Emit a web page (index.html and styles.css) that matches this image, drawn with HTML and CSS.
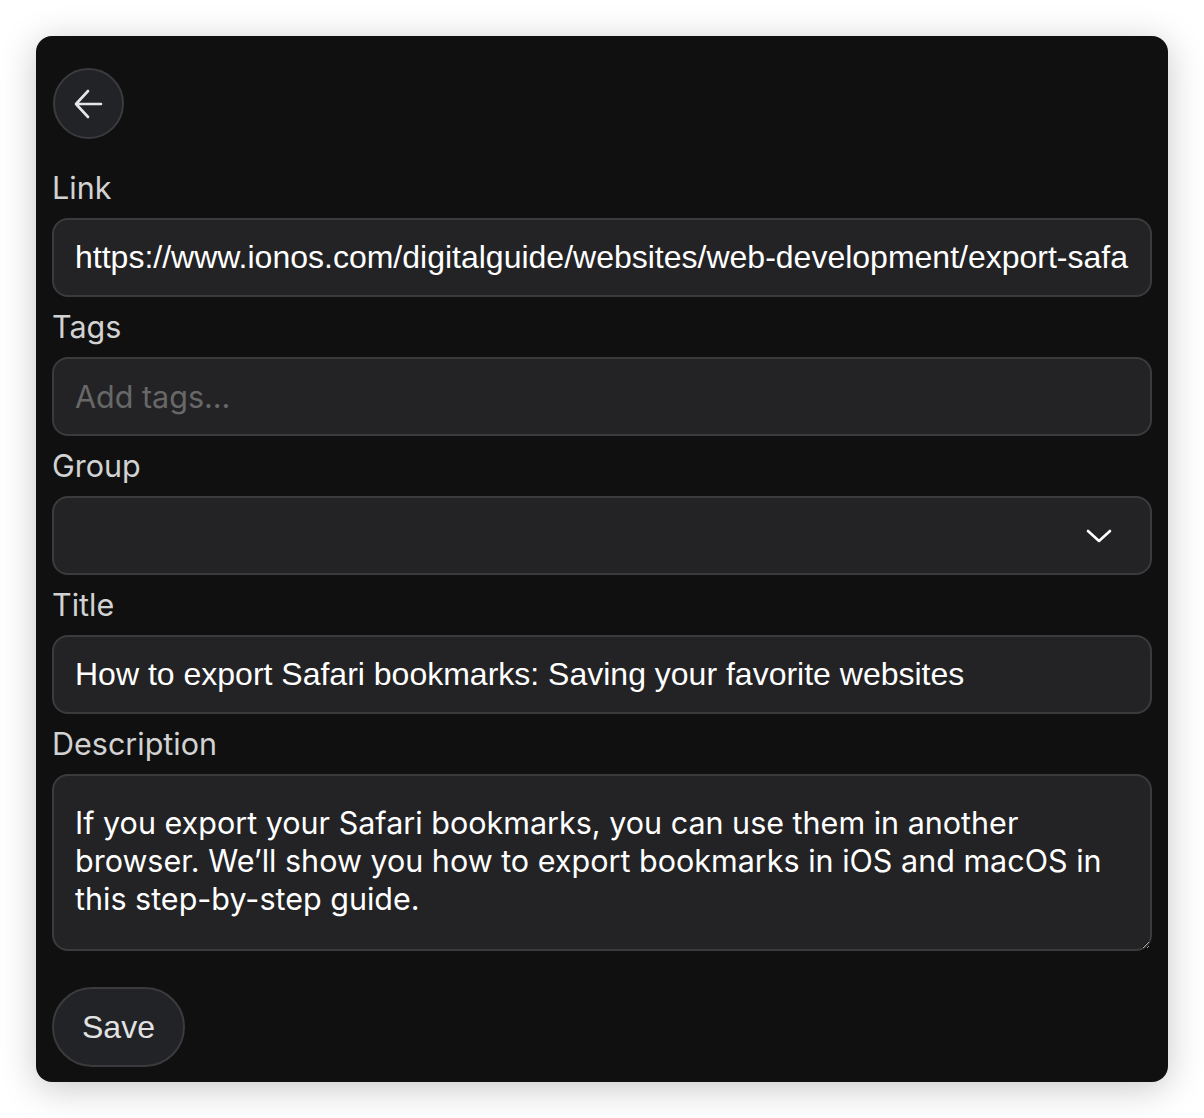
FILE: index.html
```html
<!DOCTYPE html>
<html lang="en">
<head>
<meta charset="utf-8">
<title>Edit link</title>
<link rel="stylesheet" href="styles.css">
</head>
<body>
<div class="card">
  <button class="back" type="button" aria-label="Back">
    <svg width="30" height="30" viewBox="0 0 30 30" fill="none" stroke="currentColor" stroke-width="2.6" stroke-linecap="round" stroke-linejoin="round">
      <path d="M27 15H2M14 2L2 15L14 28"/>
    </svg>
  </button>
  <form class="form">
    <label class="label" for="link">Link</label>
    <input class="field field-arial" id="link" type="text" value="https://www.ionos.com/digitalguide/websites/web-development/export-safari-bookmarks/">
    <label class="label" for="tags">Tags</label>
    <input class="field" id="tags" type="text" placeholder="Add tags...">
    <label class="label" for="group">Group</label>
    <div class="select">
      <svg class="chev" width="26" height="14" viewBox="0 0 26 14" fill="none" stroke="#ffffff" stroke-width="2.6" stroke-linecap="round" stroke-linejoin="round">
        <path d="M2 2L13 12L24 2"/>
      </svg>
    </div>
    <label class="label" for="title">Title</label>
    <input class="field field-arial" id="title" type="text" value="How to export Safari bookmarks: Saving your favorite websites">
    <label class="label" for="desc">Description</label>
    <textarea class="area" id="desc">If you export your Safari bookmarks, you can use them in another browser. We’ll show you how to export bookmarks in iOS and macOS in this step-by-step guide.</textarea>
    <div class="actions">
      <button class="save" type="button">Save</button>
    </div>
  </form>
</div>
</body>
</html>
```
FILE: styles.css
```css
* { box-sizing: border-box; }
html, body { margin: 0; padding: 0; background: #ffffff; }
body {
  padding: 36px;
  font-family: Inter, "Noto Sans", sans-serif;
}
.card {
  width: 1132px;
  height: 1046px;
  background: #101010;
  border-radius: 16px;
  box-shadow: 0 6px 36px rgba(0, 0, 0, 0.22);
  padding: 32px 16px 15px 16px;
  display: flex;
  flex-direction: column;
  overflow: hidden;
}
.card > * { flex-shrink: 0; }
.back {
  width: 71px;
  height: 71px;
  margin-left: 1px;
  border-radius: 50%;
  background: #222327;
  border: 2px solid #3b3b3e;
  color: #e6e6e6;
  display: flex;
  align-items: center;
  justify-content: center;
  padding: 0;
}
.form {
  display: flex;
  flex-direction: column;
  margin-top: 31px;
}
.form > * { flex-shrink: 0; }
.label {
  display: block;
  font-size: 30.5px;
  line-height: 36px;
  color: #d2d2d2;
  margin: 12px 0 12px 0;
}
.form > .label:first-child { margin-top: 0; }
.field, .select {
  width: 100%;
  height: 79px;
  background: #232325;
  border: 2px solid #3b3b3d;
  border-radius: 16px;
  padding: 0 21px;
  color: #ffffff;
  font-family: Inter, "Noto Sans", sans-serif;
  font-size: 30.5px;
  outline: none;
}
.field-arial {
  font-family: "Liberation Sans", Arial, sans-serif;
  font-size: 32px;
}
.field::placeholder { color: #686868; }
.select {
  display: flex;
  align-items: center;
  justify-content: flex-end;
  padding-right: 38px;
}
.chev { display: block; }
.area {
  width: 100%;
  height: 177px;
  background: #232325;
  border: 2px solid #3b3b3d;
  border-radius: 16px;
  padding: 28px 21px 10px 21px;
  color: #ffffff;
  font-family: Inter, "Noto Sans", sans-serif;
  font-size: 30.5px;
  line-height: 38px;
  resize: vertical;
  outline: none;
  display: block;
  color-scheme: dark;
}
.actions {
  display: flex;
  margin-top: 36px;
}
.save {
  height: 80px;
  padding: 0 28px;
  border-radius: 40px;
  background: #222327;
  border: 2px solid #3b3b3e;
  color: #e2e2e2;
  font-family: "Liberation Sans", Arial, sans-serif;
  font-size: 32px;
}
```
